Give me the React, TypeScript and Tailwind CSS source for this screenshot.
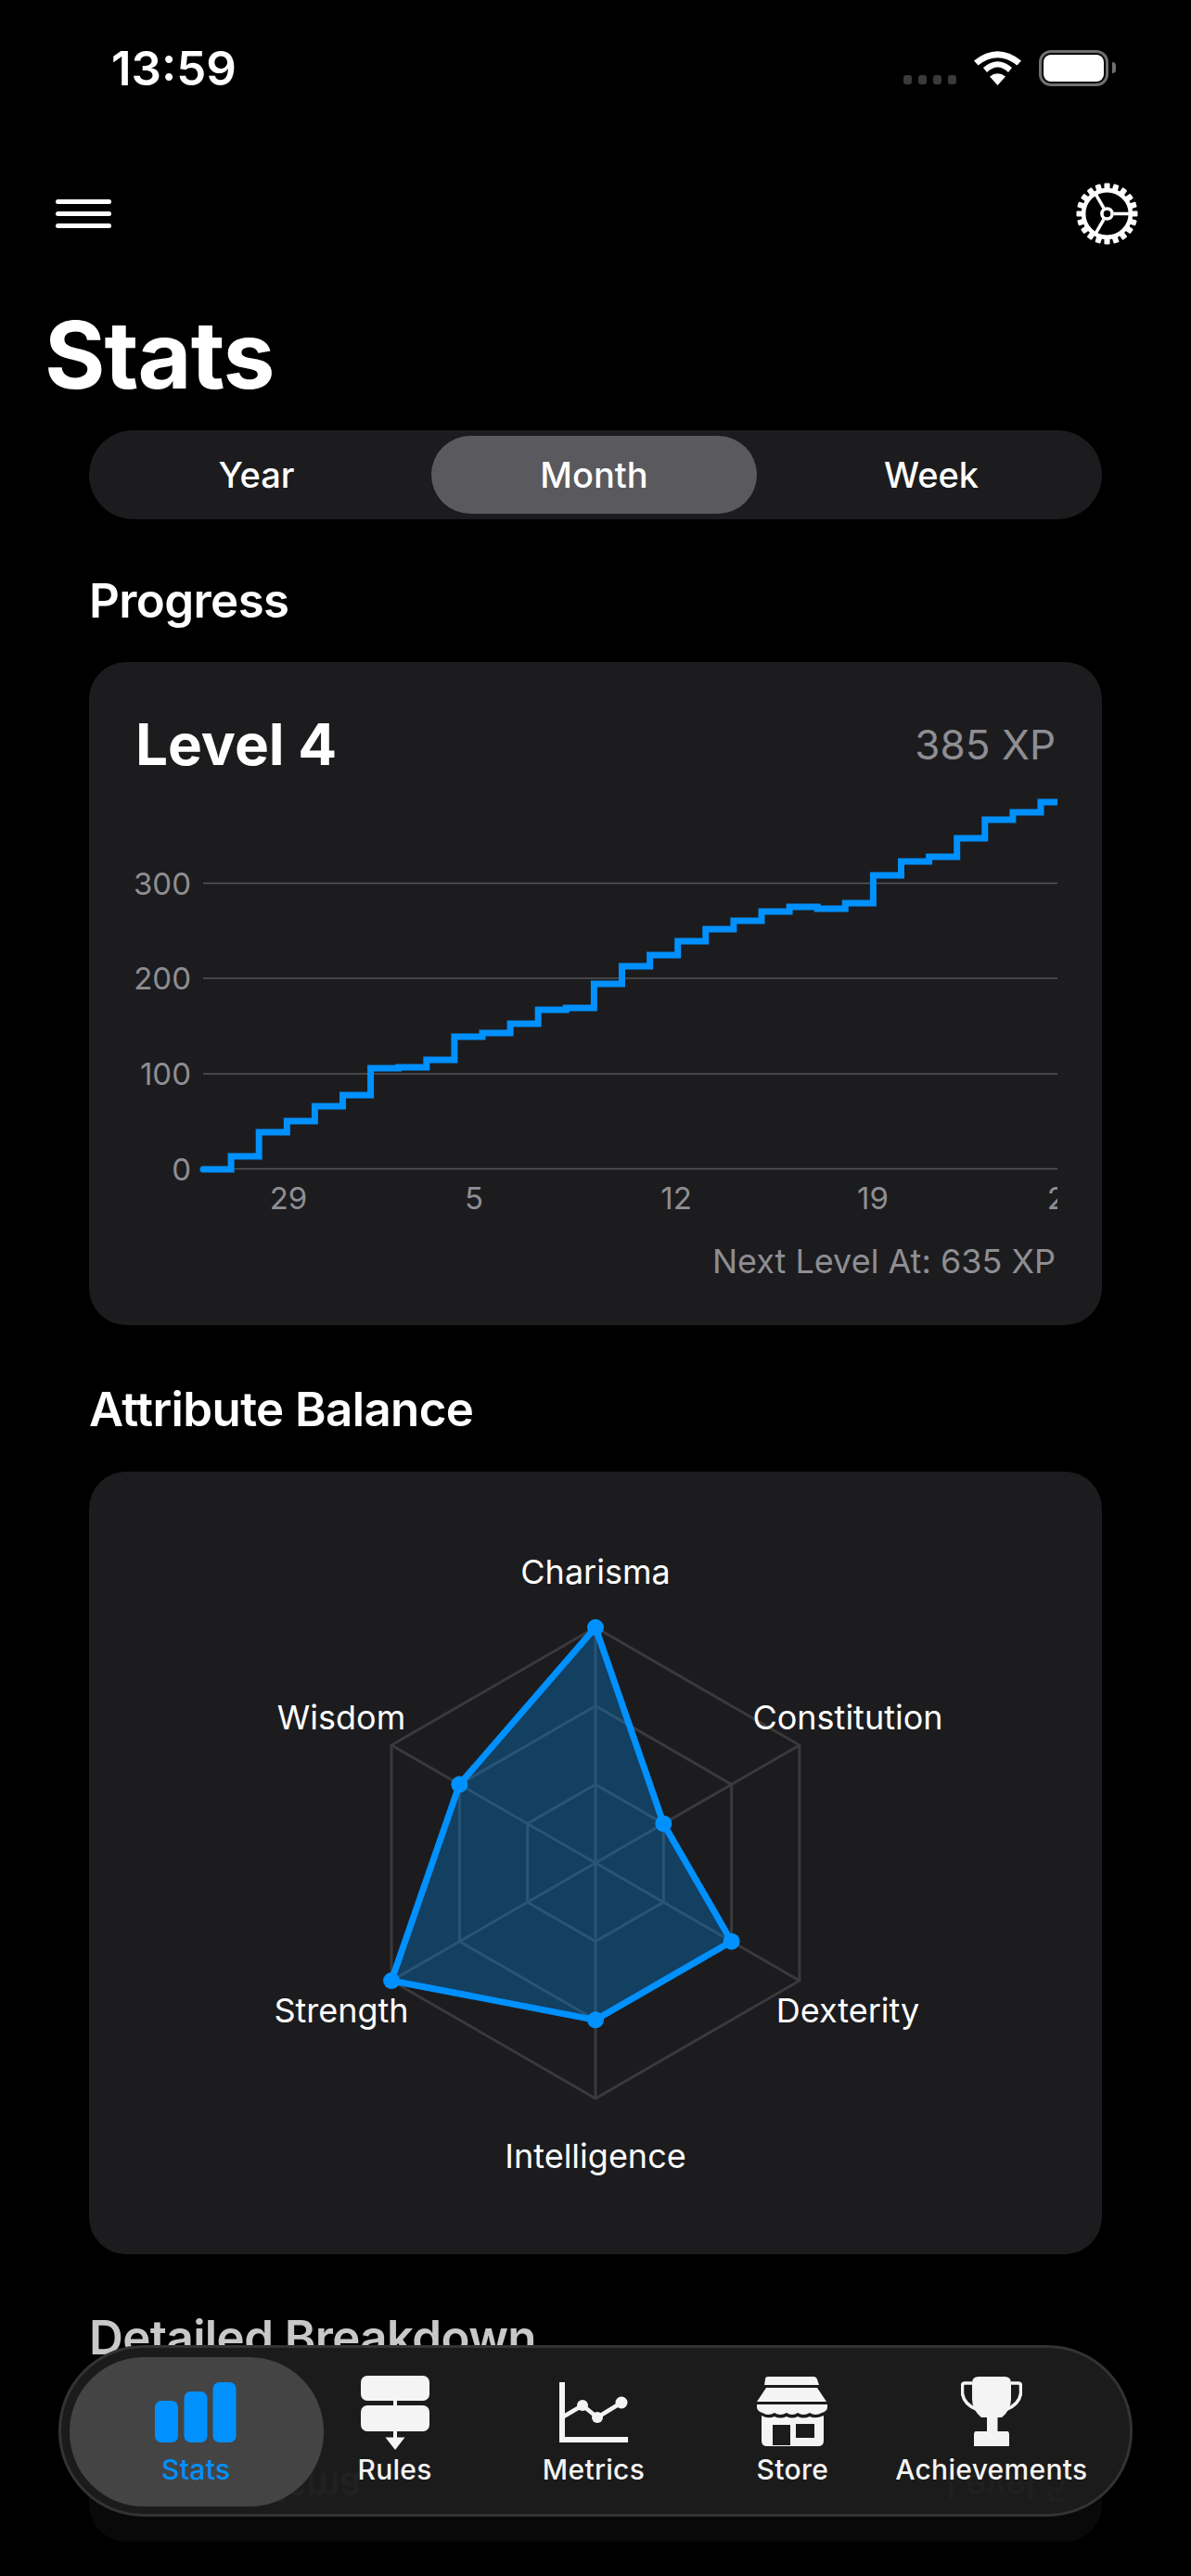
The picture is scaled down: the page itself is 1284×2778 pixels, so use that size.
const font = "font-[Inter,sans-serif]";

// step chart samples, in card pixels measured from the screenshot
const stepY = [1261, 1247, 1221, 1209, 1193, 1181, 1152, 1151, 1143, 1118, 1114, 1104, 1089, 1087, 1061, 1042, 1030, 1015, 1002, 993, 983, 978, 980, 974, 944, 929, 924, 904, 884, 876, 865];
const stepStart = 219;
const stepWidth = 30.1;

function stepPath() {
    let d = `M${stepStart} ${stepY[0]}`;
    stepY.forEach((y, i) => {
        const x = stepStart + i * stepWidth;
        if (i > 0) d += ` V${y}`;
        d += ` H${i === stepY.length - 1 ? 1140 : x + stepWidth}`;
    });
    return d;
}

const radarCx = 642;
const radarCy = 2009;
const radarR = 254;
// order: top, clockwise
const radarValues = [1, 1 / 3, 2 / 3, 2 / 3, 1, 2 / 3];
const radarLabels = [
    { text: 'Charisma', x: 642, y: 1695 },
    { text: 'Constitution', x: 914, y: 1852 },
    { text: 'Dexterity', x: 914, y: 2168 },
    { text: 'Intelligence', x: 642, y: 2325 },
    { text: 'Strength', x: 368, y: 2168 },
    { text: 'Wisdom', x: 368, y: 1852 },
];

function radarPoint(i: number, scale: number) {
    const a = (Math.PI / 3) * i;
    return [radarCx + Math.sin(a) * radarR * scale - 96, radarCy - Math.cos(a) * radarR * scale - 1587];
}

function ring(scale: number) {
    return [0, 1, 2, 3, 4, 5].map((i) => radarPoint(i, scale).join(',')).join(' ');
}

function StatusBar() {
    return (
        <div className="flex h-[146px] items-center justify-between pl-[120px] pr-[89px]">
            <span className="text-[51px] leading-none font-semibold text-white">13:59</span>
            <div className="flex items-center">
                <div className="mt-[26px] mr-[19px] flex gap-[6.5px]">
                    {[0, 1, 2, 3].map((i) => (
                        <div key={i} className="h-[10px] w-[9.5px] rounded-[3px] bg-[#3a3a3a]" />
                    ))}
                </div>
                <svg width="51" height="37" viewBox="0 0 51 37" className="mr-[19px]">
                    <path d="M25.500 37 L17 27.500 Q25.500 21 34 27.500 Z" fill="#fff" />
                    <path d="M10 18 Q25.500 4.500 41 18 L37 23 Q25.500 12 14 23 Z" fill="#fff" />
                    <path d="M0 10.500 Q25.500 -10 51 10.500 L46.500 15.500 Q25.500 -1 4.500 15.500 Z" fill="#fff" />
                </svg>
                <div className="relative h-[39px] w-[75px] rounded-[13px] border-[3.5px] border-[#6f6f6f] p-[2px]">
                    <div className="h-full w-full rounded-[8px] bg-white" />
                    <div className="absolute top-[10px] right-[-11px] h-[12px] w-[4px] rounded-r-full bg-[#6f6f6f]" />
                </div>
            </div>
        </div>
    );
}

function GearIcon() {
    return (
        <svg width="67" height="67" viewBox="-33 -33 66 66" fill="none" stroke="#fff">
            {Array.from({ length: 20 }).map((_, i) => (
                <rect key={i} x="24" y="-3" width="8.500" height="6" rx="1" fill="#fff" stroke="none" transform={`rotate(${i * 18})`} />
            ))}
            <circle r="25" strokeWidth="4.500" />
            <circle r="5.500" strokeWidth="3.500" />
            <path d="M7 0H25M-3.500 -6L-12.500 -21.600M-3.500 6L-12.500 21.600" strokeWidth="3.500" />
        </svg>
    );
}

function ProgressChart() {
    const ticks = [
        { label: '300', y: 952.5 },
        { label: '200', y: 1055 },
        { label: '100', y: 1158 },
        { label: '0', y: 1260.5 },
    ];
    const dates = [
        { label: '29', x: 311 },
        { label: '5', x: 511 },
        { label: '12', x: 729 },
        { label: '19', x: 941 },
        { label: '26', x: 1149 },
    ];
    return (
        <svg width="1092" height="480" viewBox="96 850 1092 480" className="block">
            <defs>
                <clipPath id="plot">
                    <rect x="96" y="850" width="1044" height="480" />
                </clipPath>
            </defs>
            {ticks.map((t) => (
                <g key={t.label}>
                    <line x1="219" x2="1140" y1={t.y} y2={t.y} stroke="#555558" strokeWidth="1.500" />
                    <text x="206" y={t.y + 12} textAnchor="end" fontSize="33" fill="#8e8e93" fontFamily="Inter">
                        {t.label}
                    </text>
                </g>
            ))}
            <g clipPath="url(#plot)">
                {dates.map((d) => (
                    <text key={d.label} x={d.x} y="1304" textAnchor="middle" fontSize="33" fill="#8e8e93" fontFamily="Inter">
                        {d.label}
                    </text>
                ))}
                <path d={stepPath()} fill="none" stroke="#0091ff" strokeWidth="7" strokeLinecap="round" strokeLinejoin="miter" />
            </g>
        </svg>
    );
}

function RadarChart() {
    const points = radarValues.map((v, i) => radarPoint(i, v));
    return (
        <svg width="1092" height="844" viewBox="0 0 1092 844" className="block">
            {[1 / 3, 2 / 3, 1].map((s) => (
                <polygon key={s} points={ring(s)} fill="none" stroke="#3a3a3c" strokeWidth="3" />
            ))}
            {[0, 1, 2, 3, 4, 5].map((i) => {
                const [x, y] = radarPoint(i, 1);
                return <line key={i} x1={radarCx - 96} y1={radarCy - 1587} x2={x} y2={y} stroke="#3a3a3c" strokeWidth="3" />;
            })}
            <polygon points={points.map((p) => p.join(',')).join(' ')} fill="#0091ff" fillOpacity="0.3" stroke="#0091ff" strokeWidth="7" strokeLinejoin="round" />
            {points.map(([x, y], i) => (
                <circle key={i} cx={x} cy={y} r="9" fill="#0091ff" />
            ))}
            {radarLabels.map((l) => (
                <text key={l.text} x={l.x - 96} y={l.y - 1587 + 13} textAnchor="middle" fontSize="36" fill="#fff" fontFamily="Inter">
                    {l.text}
                </text>
            ))}
        </svg>
    );
}

function StatsIcon() {
    return (
        <svg width="88" height="65" viewBox="0 0 88 65" fill="#0091ff">
            <rect x="0" y="20" width="25" height="45" rx="7" />
            <rect x="31.500" y="10" width="25" height="55" rx="7" />
            <rect x="62.500" y="0" width="25" height="65" rx="7" />
        </svg>
    );
}

function RulesIcon() {
    return (
        <svg width="74" height="80" viewBox="0 0 74 80" fill="#f4f4f4">
            <rect x="0" y="0" width="74" height="27" rx="7" />
            <rect x="0" y="32" width="74" height="28" rx="7" />
            <rect x="35" y="27" width="4" height="5" />
            <rect x="35" y="60" width="4" height="8" />
            <path d="M26.500 66.500H47.500L37 80Z" strokeLinejoin="round" />
        </svg>
    );
}

function MetricsIcon() {
    return (
        <svg width="74" height="65" viewBox="0 0 74 65" fill="none" stroke="#f4f4f4">
            <path d="M3 0V62H74" strokeWidth="6" />
            <path d="M3 38L25 25L41 38L67 22" strokeWidth="4.500" />
            <circle cx="25" cy="25" r="6" fill="#f4f4f4" stroke="none" />
            <circle cx="41" cy="38" r="6" fill="#f4f4f4" stroke="none" />
            <circle cx="67" cy="22" r="6.500" fill="#f4f4f4" stroke="none" />
        </svg>
    );
}

function StoreIcon() {
    return (
        <svg width="76" height="75" viewBox="0 0 76 75" fill="#f4f4f4">
            <path d="M9 3Q9 0 12 0H61Q64 0 65 3L67 9H8Z" />
            <path d="M10 12H65L75 27H0Z" />
            <path d="M0 30H76V33Q76 37 70 39Q63 43 57 39Q50 43 44 39Q38 43 32 39Q25 43 19 39Q12 43 6 39Q0 37 0 33Z" />
            <path fillRule="evenodd" d="M5 42Q12 46 19 43Q25 46 32 43Q38 46 44 43Q50 46 57 43Q63 46 72 42V69Q72 75 66 75H11Q5 75 5 69ZM17 52V74H36V52ZM42 51V66H62V51Z" />
        </svg>
    );
}

function TrophyIcon() {
    return (
        <svg width="66" height="75" viewBox="0 0 66 75" fill="#f4f4f4">
            <path d="M12 7Q12 0 19 0H47Q54 0 54 7V24Q54 36 44 44H39.500V59H50Q52 59 52 63V75H14V63Q14 59 16 59H28V44H22Q12 36 12 24Z" />
            <path d="M12 7H4Q1.500 7 1.500 10V18Q3 30 18 36" fill="none" stroke="#f4f4f4" strokeWidth="3.500" />
            <path d="M54 7H62Q64.500 7 64.500 10V18Q63 30 48 36" fill="none" stroke="#f4f4f4" strokeWidth="3.500" />
        </svg>
    );
}

function TabBar() {
    const tabs = [
        { label: 'Stats', icon: <StatsIcon />, iconClass: 'h-[80px] pt-[7px]', active: true },
        { label: 'Rules', icon: <RulesIcon />, iconClass: 'h-[80px]', active: false },
        { label: 'Metrics', icon: <MetricsIcon />, iconClass: 'h-[80px] pt-[7px]', active: false },
        { label: 'Store', icon: <StoreIcon />, iconClass: 'h-[80px] pt-[1px]', active: false },
        { label: 'Achievements', icon: <TrophyIcon />, iconClass: 'h-[80px] pt-[1px]', active: false },
    ];
    return (
        <div className="absolute top-[2529px] left-[63px] h-[185px] w-[1158px] rounded-[92px] border-[3px] border-[#333335] bg-[#1b1b1b]">
            {/* faint mirrored reflection of the row scrolled behind the glass */}
            <div className="absolute top-[128px] left-[141px] origin-center text-[40px] leading-[44px] font-medium text-[#232323] blur-[1px] [transform:scaleY(-1.1)]">Charisma</div>
            <div className="absolute top-[128px] left-[954px] origin-center text-[38px] leading-[44px] font-medium text-[#202020] blur-[1px] [transform:scaleY(-1.1)]">Level 5</div>
            <div className="absolute top-[10px] left-[9px] h-[161px] w-[274px] rounded-[80px] bg-[#444444]" />
            <div className="relative grid h-full grid-cols-5 pt-[30px] pr-[42px] pl-[38px]">
                {tabs.map((t) => (
                    <div key={t.label} className="flex flex-col items-center">
                        <div className={t.iconClass}>{t.icon}</div>
                        <span className={`mt-[3px] text-[30px] leading-[36px] font-medium tracking-[0.3px] ${t.active ? 'text-[#0091ff]' : 'text-[#f4f4f4]'}`}>{t.label}</span>
                    </div>
                ))}
            </div>
        </div>
    );
}

export default function App() {
    return (
        <div className={`relative h-[2778px] w-[1284px] overflow-hidden bg-black ${font}`}>
            <StatusBar />
            <div className="mt-[42px] flex h-[85px] items-center justify-between pr-[57px] pl-[60px]">
                <div className="flex w-[60px] flex-col gap-[8px]">
                    <div className="h-[5px] rounded-full bg-white" />
                    <div className="h-[5px] rounded-full bg-white" />
                    <div className="h-[5px] rounded-full bg-white" />
                </div>
                <GearIcon />
            </div>
            <h1 className="mt-[52px] pl-[48px] text-[100px] leading-[116px] font-bold tracking-[-1px] text-white">Stats</h1>
            <div className="mx-[96px] mt-[23px]">
                <div className="flex h-[96px] items-center rounded-[48px] bg-[#1c1c1e] px-[6px] text-[38px] font-medium text-white">
                    <div className="flex w-[363px] justify-center pr-[14px]">Year</div>
                    <div className="flex h-[84px] w-[351px] items-center justify-center rounded-[42px] bg-[#5a5a5e]">Month</div>
                    <div className="flex flex-1 justify-center pl-[10px]">Week</div>
                </div>
                <h2 className="mt-[58px] text-[51px] leading-[60px] font-semibold tracking-[-0.6px] text-white">Progress</h2>
                <div className="mt-[36px] h-[715px] rounded-[40px] bg-[#1c1c1e]">
                    <div className="flex items-center justify-between px-[50px] pt-[54px]">
                        <span className="text-[62px] leading-[70px] font-bold text-white">Level 4</span>
                        <span className="text-[44px] leading-[70px] text-[#8e8e93]">385 XP</span>
                    </div>
                    <div className="mt-[12px]">
                        <ProgressChart />
                    </div>
                    <div className="mt-[8px] pr-[50px] text-right text-[36px] leading-[44px] text-[#8e8e93]">Next Level At: 635 XP</div>
                </div>
                <h2 className="mt-[61px] text-[51px] leading-[60px] font-semibold tracking-[-0.6px] text-white">Attribute Balance</h2>
                <div className="mt-[37px] h-[844px] rounded-[40px] bg-[#1c1c1e]">
                    <RadarChart />
                </div>
                <h2 className="mt-[60px] text-[51px] leading-[60px] font-semibold tracking-[-0.6px] text-[#c8c8c8]">Detailed Breakdown</h2>
                <div className="mt-[30px] h-[160px] rounded-[40px] bg-[#090909]" />
            </div>
            <TabBar />
        </div>
    );
}
